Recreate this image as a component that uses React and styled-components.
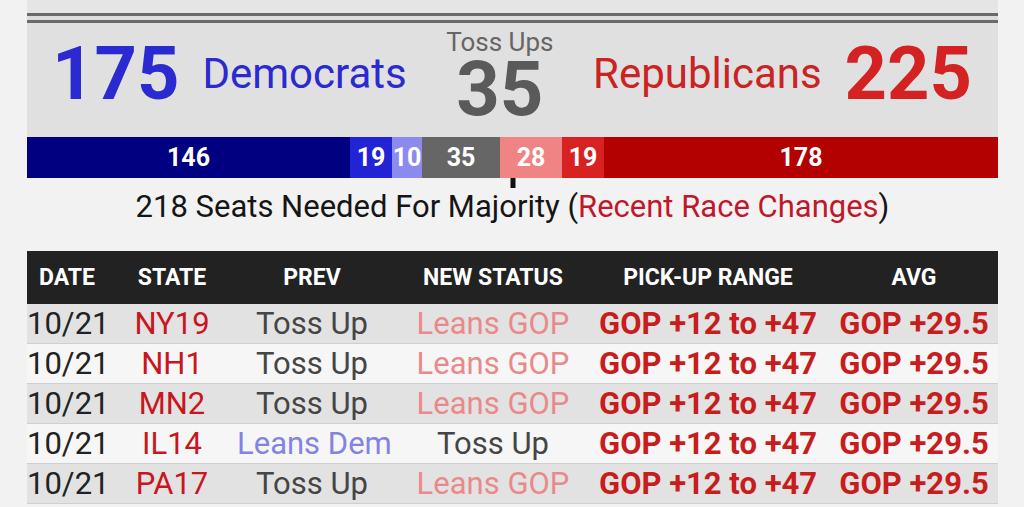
import styled, { createGlobalStyle } from "styled-components";

const GlobalStyle = createGlobalStyle`
  html, body {
    margin: 0;
    padding: 0;
    background: #f2f2f2;
    font-family: "Roboto", "Liberation Sans", sans-serif;
  }
`;

const Page = styled.div`
  width: 1024px;
  height: 507px;
  padding: 0 26px 0 27px;
  box-sizing: border-box;
  overflow: hidden;
`;

const Column = styled.div`
  display: flex;
  flex-direction: column;
`;

const TopStrip = styled.div`
  height: 13px;
  background: #e5e5e5;
`;

const DoubleRule = styled.div`
  height: 4px;
  border-top: 3px solid #6a6a6a;
  border-bottom: 3px solid #6a6a6a;
  background: #dcdcdc;
`;

const Scoreboard = styled.div`
  height: 114px;
  box-sizing: border-box;
  padding: 0 26px 12px 25px;
  background: #e0e0e0;
  display: flex;
  justify-content: space-between;
  align-items: center;
`;

const Party = styled.div`
  display: flex;
  align-items: center;
  gap: 23px;
`;

const BigCount = styled.div`
  font-size: 74px;
  font-weight: 700;
  line-height: 1;
  color: ${(p) => p.color};
`;

const PartyName = styled.div`
  font-size: 42px;
  line-height: 1;
  color: ${(p) => p.color};
`;

const Toss = styled.div`
  align-self: flex-start;
  margin-top: 6px;
  display: flex;
  flex-direction: column;
  align-items: center;
`;

const TossLabel = styled.div`
  font-size: 26px;
  line-height: 1;
  color: #666;
`;

const TossCount = styled.div`
  font-size: 76px;
  font-weight: 700;
  line-height: 0.92;
  color: #5a5a5a;
`;

const Bar = styled.div`
  display: flex;
  height: 41px;
`;

const Segment = styled.div`
  flex: ${(p) => (p.grow ? "1 1 auto" : `0 0 ${p.w}px`)};
  background: ${(p) => p.bg};
  color: #fff;
  font-size: 25px;
  font-weight: 700;
  line-height: 41px;
  text-align: center;
  overflow: hidden;
  white-space: nowrap;
`;

const Majority = styled.div`
  position: relative;
  height: 73px;
  box-sizing: border-box;
  padding-top: 13px;
  text-align: center;
  font-size: 31px;
  line-height: 1;
  color: #151515;
`;

const Tick = styled.div`
  position: absolute;
  top: 0;
  left: 50.1%;
  width: 5px;
  height: 10px;
  background: #111;
  transform: translateX(-50%);
`;

const RaceLink = styled.span`
  color: #c0182a;
`;

const Table = styled.div`
  display: flex;
  flex-direction: column;
`;

const Row = styled.div`
  display: grid;
  grid-template-columns: 80px 130px 150px 212px 218px 181px;
  align-items: center;
  height: ${(p) => (p.head ? "53px" : "40px")};
  box-sizing: border-box;
  background: ${(p) => (p.head ? "#222" : p.alt ? "#f6f6f6" : "#e2e2e2")};
  border-bottom: ${(p) => (p.head ? "none" : "1px solid #cfcfcf")};
`;

const HeadCell = styled.div`
  text-align: center;
  color: #fff;
  font-size: 23px;
  font-weight: 700;
  white-space: nowrap;
  padding-left: ${(p) => (p.last ? "13px" : "0")};
`;

const Cell = styled.div`
  text-align: center;
  font-size: 31px;
  line-height: 1;
  white-space: nowrap;
  color: ${(p) => p.color || "#222"};
  font-weight: ${(p) => (p.bold ? 700 : 400)};
  padding-left: ${(p) => (p.last ? "13px" : "0")};
`;

const DEM_BLUE = "#2a2ad0";
const GOP_RED = "#d42222";

const statusColor = {
  "Toss Up": "#454545",
  "Leans GOP": "#e98a8a",
  "Leans Dem": "#8383e2",
};

const segments = [
  { n: 146, w: 323, bg: "#000080" },
  { n: 19, w: 42, bg: "#2323d6" },
  { n: 10, w: 30, bg: "#8b8bef" },
  { n: 35, w: 78, bg: "#666666" },
  { n: 28, w: 62, bg: "#f08383" },
  { n: 19, w: 42, bg: "#d82222" },
  { n: 178, grow: true, bg: "#b30000" },
];

const races = [
  { state: "NY19", prev: "Toss Up", next: "Leans GOP" },
  { state: "NH1", prev: "Toss Up", next: "Leans GOP" },
  { state: "MN2", prev: "Toss Up", next: "Leans GOP" },
  { state: "IL14", prev: "Leans Dem", next: "Toss Up" },
  { state: "PA17", prev: "Toss Up", next: "Leans GOP" },
];

export default function App() {
  return (
    <>
      <GlobalStyle />
      <Page>
        <Column>
          <TopStrip />
          <DoubleRule />
          <Scoreboard>
            <Party>
              <BigCount color={DEM_BLUE}>175</BigCount>
              <PartyName color={DEM_BLUE}>Democrats</PartyName>
            </Party>
            <Toss>
              <TossLabel>Toss Ups</TossLabel>
              <TossCount>35</TossCount>
            </Toss>
            <Party>
              <PartyName color="#c92323">Republicans</PartyName>
              <BigCount color={GOP_RED}>225</BigCount>
            </Party>
          </Scoreboard>

          <Bar>
            {segments.map((s, i) => (
              <Segment key={i} w={s.w} grow={s.grow} bg={s.bg}>
                {s.n}
              </Segment>
            ))}
          </Bar>

          <Majority>
            <Tick />
            218 Seats Needed For Majority (<RaceLink>Recent Race Changes</RaceLink>)
          </Majority>

          <Table>
            <Row head>
              <HeadCell>DATE</HeadCell>
              <HeadCell>STATE</HeadCell>
              <HeadCell>PREV</HeadCell>
              <HeadCell>NEW STATUS</HeadCell>
              <HeadCell>PICK-UP RANGE</HeadCell>
              <HeadCell last>AVG</HeadCell>
            </Row>
            {races.map((r, i) => (
              <Row key={r.state} alt={i % 2 === 1}>
                <Cell>10/21</Cell>
                <Cell color="#c8161f">{r.state}</Cell>
                <Cell color={statusColor[r.prev]}>{r.prev}</Cell>
                <Cell color={statusColor[r.next]}>{r.next}</Cell>
                <Cell bold color="#c81d1d">GOP +12 to +47</Cell>
                <Cell bold last color="#c81d1d">GOP +29.5</Cell>
              </Row>
            ))}
          </Table>
        </Column>
      </Page>
    </>
  );
}
